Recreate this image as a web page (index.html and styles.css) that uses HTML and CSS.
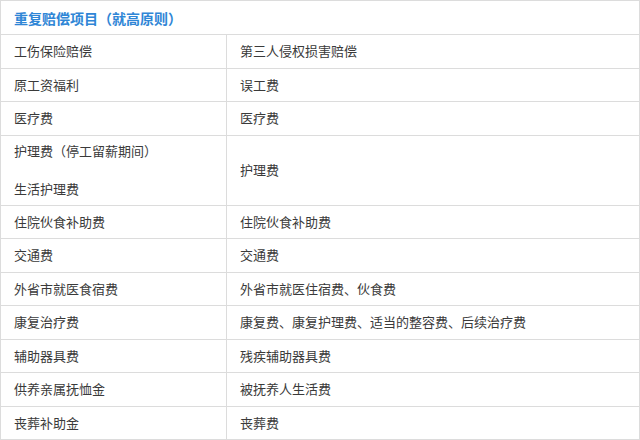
FILE: index.html
```html
<!DOCTYPE html>
<html lang="zh">
<head>
<meta charset="utf-8">
<link rel="stylesheet" href="styles.css">
</head>
<body>
<table class="tbl">
  <colgroup><col class="c1"><col class="c2"></colgroup>
  <tr class="head"><td colspan="2">重复赔偿项目（就高原则）</td></tr>
  <tr><td>工伤保险赔偿</td><td>第三人侵权损害赔偿</td></tr>
  <tr><td>原工资福利</td><td>误工费</td></tr>
  <tr><td>医疗费</td><td>医疗费</td></tr>
  <tr class="tall"><td><p class="line">护理费（停工留薪期间）</p><p class="line">生活护理费</p></td><td>护理费</td></tr>
  <tr><td>住院伙食补助费</td><td>住院伙食补助费</td></tr>
  <tr><td>交通费</td><td>交通费</td></tr>
  <tr><td>外省市就医食宿费</td><td>外省市就医住宿费、伙食费</td></tr>
  <tr><td>康复治疗费</td><td>康复费、康复护理费、适当的整容费、后续治疗费</td></tr>
  <tr><td>辅助器具费</td><td>残疾辅助器具费</td></tr>
  <tr><td>供养亲属抚恤金</td><td>被抚养人生活费</td></tr>
  <tr><td>丧葬补助金</td><td>丧葬费</td></tr>
</table>
</body>
</html>
```
FILE: styles.css
```css
html, body {
  margin: 0;
  padding: 0;
  background: #fff;
}
.tbl {
  width: 639px;
  border-collapse: collapse;
  table-layout: fixed;
  font-family: "Noto Sans CJK SC", "Noto Sans", sans-serif;
  font-size: 13px;
  color: #3a3a3a;
}
.c1 { width: 226px; }
.c2 { width: 413px; }
.tbl td {
  border: 1px solid #dcdcdc;
  padding: 0 13px;
  height: 32.5px;
  line-height: 20px;
  vertical-align: middle;
}
.head td {
  color: #2f86d6;
  font-weight: bold;
  font-size: 14px;
  height: 33px;
}
.tall td {
  height: 69px;
}
.line {
  margin: 0;
}
.line + .line {
  margin-top: 18px;
}
```
